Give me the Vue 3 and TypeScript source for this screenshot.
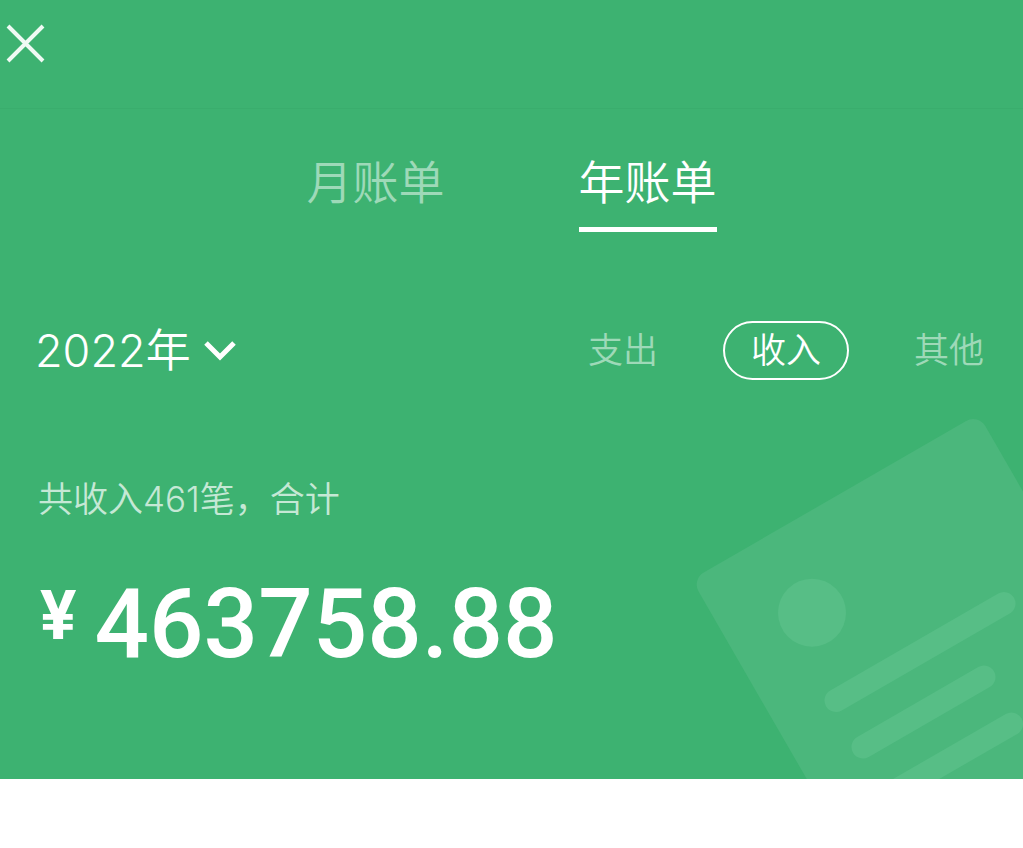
<script setup lang="ts">
import { ref } from 'vue'

type Period = 'month' | 'year'
type Kind = 'expense' | 'income' | 'other'

const periods: { id: Period; label: string }[] = [
  { id: 'month', label: '月账单' },
  { id: 'year', label: '年账单' },
]
const kinds: { id: Kind; label: string }[] = [
  { id: 'expense', label: '支出' },
  { id: 'income', label: '收入' },
  { id: 'other', label: '其他' },
]
const years = [2022, 2021, 2020]

const period = ref<Period>('year')
const kind = ref<Kind>('income')
const year = ref(2022)
const count = 461
const total = '463758.88'
</script>

<template>
  <main class="bill">
    <header class="topbar">
      <button class="close" type="button" aria-label="关闭">
        <svg width="40" height="40" viewBox="0 0 40 40" aria-hidden="true">
          <path d="M3 3 L38 38 M38 3 L3 38" fill="none" stroke="currentColor" stroke-width="4" />
        </svg>
      </button>
    </header>

    <nav class="tabs">
      <button
        v-for="p in periods"
        :key="p.id"
        type="button"
        class="tab"
        :class="{ active: period === p.id }"
        @click="period = p.id"
      >{{ p.label }}</button>
    </nav>

    <div class="filters">
      <div class="year">
        <select v-model="year" class="year-select" aria-label="年份">
          <option v-for="y in years" :key="y" :value="y">{{ y }}年</option>
        </select>
        <svg class="chevron" width="32" height="22" viewBox="0 0 32 22" aria-hidden="true">
          <path d="M2 3 L16 17 L30 3" fill="none" stroke="currentColor" stroke-width="5" />
        </svg>
      </div>
      <div class="kinds">
        <button
          v-for="k in kinds"
          :key="k.id"
          type="button"
          class="kind"
          :class="{ active: kind === k.id }"
          @click="kind = k.id"
        >{{ k.label }}</button>
      </div>
    </div>

    <section class="summary">
      <p class="caption">共收入{{ count }}笔，合计</p>
      <p class="amount"><span class="currency">¥</span><span>{{ total }}</span></p>
    </section>

    <svg class="art" width="343" height="379" viewBox="0 0 343 379" aria-hidden="true">
      <rect x="0" y="0" width="331" height="480" rx="14" fill="#4bb77c" transform="translate(11.6 179.5) rotate(-30)" />
      <g fill="none" stroke="#57be86" stroke-width="23" stroke-linecap="round">
        <circle cx="132" cy="212.7" r="34" fill="#57be86" stroke="none" />
        <path d="M156 300.5 L324 203.5 M183 347 L304 277 M331.5 324 L132 439" />
      </g>
    </svg>
  </main>
</template>

<style>
body {
  margin: 0;
  background: #fff;
}
</style>

<style scoped>
.bill {
  position: relative;
  overflow: hidden;
  background: #3db271;
  color: #fff;
  font-family: Inter, "Noto Sans CJK SC", sans-serif;
  font-weight: 350;
  padding-bottom: 106px;
}
button,
select {
  font: inherit;
  color: inherit;
  background: none;
  border: 0;
  padding: 0;
  margin: 0;
  cursor: pointer;
}
.topbar {
  padding: 23px 5px 45px;
  border-bottom: 1px solid #3aad6d;
}
.close {
  display: block;
  height: 40px;
  color: #effaf4;
}
.close svg {
  display: block;
}
.tabs {
  display: flex;
  justify-content: center;
  gap: 134px;
  padding-top: 43px;
}
.tab {
  font-size: 46px;
  line-height: 60px;
  padding-bottom: 15px;
  border-bottom: 5px solid transparent;
  color: #9ed9b8;
}
.tab.active {
  color: #fff;
  border-bottom-color: #fff;
}
.filters {
  display: flex;
  justify-content: space-between;
  align-items: center;
  padding: 89px 39px 0 35px;
}
.year {
  display: flex;
  align-items: center;
  gap: 13px;
}
.year-select {
  appearance: none;
  font-size: 45px;
  line-height: 59px;
  height: 59px;
}
.year-select option {
  color: #222;
}
.chevron {
  pointer-events: none;
}
.kinds {
  display: flex;
  gap: 65px;
}
.kind {
  font-size: 35px;
  line-height: 55px;
  border: 2px solid transparent;
  border-width: 2px 0;
  color: #9ed9b8;
}
.kind.active {
  padding: 0 26px;
  border: 2px solid #fff;
  border-radius: 30px;
  color: #fff;
}
.summary {
  position: relative;
  z-index: 1;
  padding: 93px 38px 0;
}
.caption {
  margin: 0;
  font-size: 35px;
  line-height: 52px;
  color: #c5e8d5;
}
.amount {
  display: flex;
  align-items: flex-start;
  gap: 18px;
  margin: 50px 0 0;
  padding-left: 2px;
  font-family: Roboto, sans-serif;
  font-size: 96px;
  line-height: 98px;
  font-weight: 500;
}
.currency {
  font-size: 68px;
  line-height: 82px;
  font-weight: 700;
}
.art {
  position: absolute;
  right: 0;
  bottom: 0;
  pointer-events: none;
}
</style>
